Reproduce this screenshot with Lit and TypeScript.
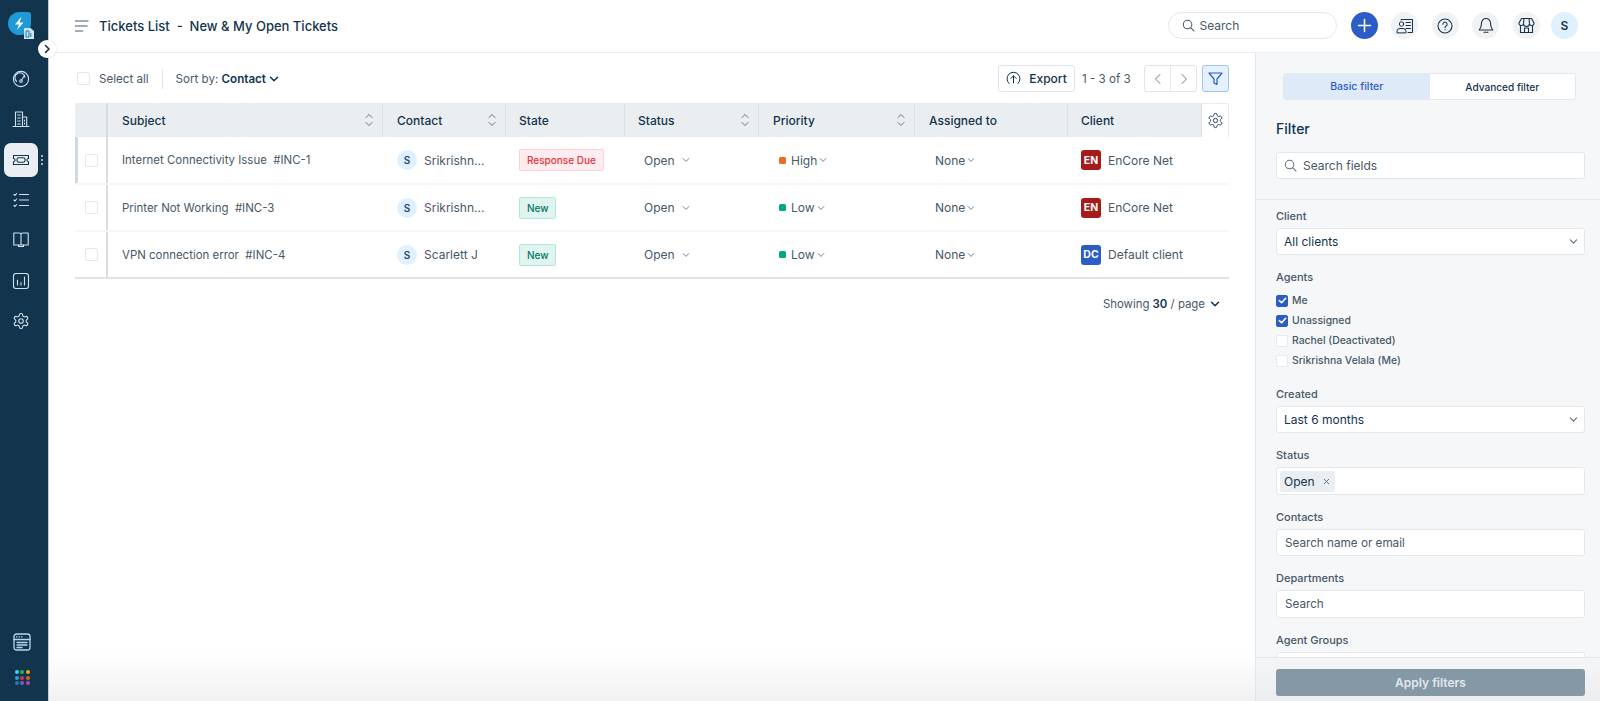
import { LitElement, html, svg, css } from "lit";
import { customElement } from "lit/decorators.js";

const gearPath = "M12.22 2h-.44a2 2 0 0 0-2 2v.18a2 2 0 0 1-1 1.73l-.43.25a2 2 0 0 1-2 0l-.15-.08a2 2 0 0 0-2.73.73l-.22.38a2 2 0 0 0 .73 2.73l.15.1a2 2 0 0 1 1 1.72v.51a2 2 0 0 1-1 1.74l-.15.09a2 2 0 0 0-.73 2.73l.22.38a2 2 0 0 0 2.73.73l.15-.08a2 2 0 0 1 2 0l.43.25a2 2 0 0 1 1 1.73V20a2 2 0 0 0 2 2h.44a2 2 0 0 0 2-2v-.18a2 2 0 0 1 1-1.73l.43-.25a2 2 0 0 1 2 0l.15.08a2 2 0 0 0 2.73-.73l.22-.39a2 2 0 0 0-.73-2.73l-.15-.08a2 2 0 0 1-1-1.74v-.5a2 2 0 0 1 1-1.74l.15-.09a2 2 0 0 0 .73-2.73l-.22-.38a2 2 0 0 0-2.73-.73l-.15.08a2 2 0 0 1-2 0l-.43-.25a2 2 0 0 1-1-1.73V4a2 2 0 0 0-2-2z";

const gear = (size: number, w = 1.3) => html`<svg width=${size} height=${size} viewBox="0 0 24 24" fill="none" stroke="currentColor" stroke-width=${w} stroke-linejoin="round"><path d=${gearPath}></path><circle cx="12" cy="12" r="3"></circle></svg>`;
const chev = (size = 8, w = 1.3) => html`<svg width=${size} height=${size} viewBox="0 0 10 10" fill="none" stroke="currentColor" stroke-width=${w} stroke-linecap="round" stroke-linejoin="round"><path d="M1.5 3.2 5 6.8l3.5-3.6"></path></svg>`;
const sort = html`<svg width="8" height="14" viewBox="0 0 8 14" fill="none" stroke="#5f7385" stroke-width="1" stroke-linecap="round" stroke-linejoin="round"><path d="M1 4.500 4 1.500 7 4.500"></path><path d="M1 9.500l3 3 3-3"></path></svg>`;
const searchIcon = (size: number) => html`<svg width=${size} height=${size} viewBox="0 0 14 14" fill="none" stroke="currentColor" stroke-width="1.1" stroke-linecap="round"><circle cx="6" cy="6" r="4.6"></circle><path d="M9.5 9.5 13 13"></path></svg>`;
const sideSvg = (body: unknown) => html`<svg width="18" height="18" viewBox="0 0 18 18" fill="none" stroke="currentColor" stroke-width="1.1" stroke-linecap="round" stroke-linejoin="round">${body}</svg>`;

const sideIcons = [
  svg`<circle cx="9" cy="9" r="7.6"></circle><path d="M4.600 11.500a5 5 0 1 1 8.300-4.200"></path><path d="M12.600 5.200 9.800 9.800"></path><circle cx="9" cy="11" r="1.300"></circle>`,
  svg`<path d="M1 16.500h16"></path><path d="M3.500 16.500V2h7v14.500"></path><path d="M10.500 7h4.200v9.500"></path><path d="M5.700 5h2.600M5.700 8h2.600M5.700 11h2.600M5.700 14h2.600M12.500 10v1M12.500 13v1"></path>`,
  svg`<path d="M1.500 4.500h15v3a1.600 1.600 0 0 0 0 3.200v2.800h-15v-2.800a1.600 1.600 0 0 0 0-3.200z"></path><rect x="5" y="6.800" width="8" height="4.400" rx="1.600"></rect>`,
  svg`<path d="M2 3.500l1 1 1.600-2M2 9l1 1 1.600-2M2 14.500l1 1 1.600-2"></path><path d="M7.500 3.500h9M7.500 9h9M7.500 14.500h9"></path>`,
  svg`<path d="M9 3.500v10.500M1.800 2H7.500A1.500 1.500 0 0 1 9 3.500 1.500 1.500 0 0 1 10.500 2h5.700v12H1.800z"></path><path d="M6.500 14v1.500h5V14"></path>`,
  svg`<rect x="1.500" y="1.500" width="15" height="15" rx="2.500"></rect><path d="M5.500 8v5M9 10.500V13M12.500 5v8"></path>`,
];

const rows = [
  { sub: "Internet Connectivity Issue", id: "#INC-1", contact: "Srikrishn...", state: "Response Due", cls: "due", pri: "High", pcls: "high", init: "EN", ccls: "en", client: "EnCore Net" },
  { sub: "Printer Not Working", id: "#INC-3", contact: "Srikrishn...", state: "New", cls: "new", pri: "Low", pcls: "low", init: "EN", ccls: "en", client: "EnCore Net" },
  { sub: "VPN connection error", id: "#INC-4", contact: "Scarlett J", state: "New", cls: "new", pri: "Low", pcls: "low", init: "DC", ccls: "dc", client: "Default client" },
];

const agents = [
  { name: "Me", on: true },
  { name: "Unassigned", on: true },
  { name: "Rachel (Deactivated)", on: false },
  { name: "Srikrishna Velala (Me)", on: false },
];

@customElement("app-root")
export class AppRoot extends LitElement {
  static styles = css`
    :host { display: block; height: 701px; overflow: hidden; font-family: Inter, "Liberation Sans", sans-serif; color: #12344d; font-size: 12px; }
    * { box-sizing: border-box; }
    .app { display: flex; height: 701px; position: relative; }
    .side { width: 49px; flex: none; background: #12344d; color: #cfe2f0; display: flex; flex-direction: column; align-items: stretch; border-right: 1px solid #c4ccd3; position: relative; }
    .logo { height: 59px; padding: 12px 0 0 8px; }
    .nav { display: flex; flex-direction: column; }
    .nav-item { height: 40.3px; display: flex; align-items: center; padding-left: 4px; position: relative; }
    .nav-box { width: 34px; height: 34px; border-radius: 7px; display: flex; align-items: center; justify-content: center; }
    .nav-item.on .nav-box { background: #ebeff3; color: #12344d; }
    .grip { position: absolute; left: 41px; top: 15px; display: flex; flex-direction: column; gap: 2px; }
    .grip i { width: 2px; height: 2px; background: #cfe2f0; border-radius: 50%; display: block; }
    .side-bottom { margin-top: auto; display: flex; flex-direction: column; align-items: center; padding: 0 0 16px 0; gap: 19px; width: 44px; }
    .apps { display: grid; grid-template-columns: repeat(3, 4px); gap: 1.5px; }
    .apps i { width: 4px; height: 4px; border-radius: 50%; display: block; }
    .toggle { position: absolute; left: 38px; top: 40px; width: 18px; height: 18px; border-radius: 50%; background: #fff; color: #12344d; display: flex; align-items: center; justify-content: center; z-index: 3; box-shadow: 0 0 2px rgba(18,52,77,.2); }

    .content { flex: 1; min-width: 0; display: flex; flex-direction: column; }
    .top { height: 53px; flex: none; border-bottom: 1px solid #ebeff3; display: flex; align-items: center; padding: 0 22px 1px 26px; background: #fff; }
    .burger { width: 14px; height: 12px; margin-right: 10px; color: #475867; display: block; }
    .title { font-size: 13px; font-weight: 500; color: #12344d; white-space: pre; }
    .title b { font-weight: 500; }
    .gsearch { margin-left: auto; width: 169px; height: 27px; border: 1px solid #e2e8ee; border-radius: 14px; display: flex; align-items: center; gap: 5px; padding-left: 13px; color: #475867; font-size: 12px; margin-right: 14px; }
    .circle { width: 27px; height: 27px; border-radius: 50%; background: #f0f2f4; color: #12344d; display: flex; align-items: center; justify-content: center; margin-right: 13.5px; flex: none; }
    .circle.plus { background: #2c5cc5; color: #fff; }
    .circle.me { background: #dff0ff; font-weight: 600; font-size: 12px; margin-right: 0; margin-left: -2px; color: #12344d; }

    .body { flex: 1; min-height: 0; display: flex; }
    .main { flex: 1; min-width: 0; padding: 12px 26px 0 26px; background: #fff; }
    .tools { height: 27px; display: flex; align-items: center; font-size: 11.6px; }
    .cb { width: 13px; height: 13px; border: 1px solid #e3e8ed; border-radius: 2px; background: #fff; flex: none; display: block; }
    .tools .cb { margin-left: 2px; margin-right: 9px; }
    .muted { color: #475867; }
    .vr { width: 1px; height: 20px; background: #dfe5ea; margin: 0 13px 0 13px; }
    .sort-by b { font-weight: 600; color: #12344d; }
    .sort-by { display: flex; align-items: center; gap: 3px; color: #475867; white-space: pre; }
    .sort-by svg { color: #12344d; }
    .right { margin-left: auto; display: flex; align-items: center; }
    .btn { height: 27px; border: 1px solid #dfe5ea; border-radius: 3px; background: #fff; display: flex; align-items: center; justify-content: center; }
    .export { width: 77px; gap: 8px; font-weight: 500; color: #12344d; font-size: 12px; }
    .count { color: #475867; margin: 0 14px 0 7px; width: 48px; white-space: nowrap; }
    .pager { width: 53px; display: flex; }
    .pager span { flex: 1; display: flex; align-items: center; justify-content: center; color: #a8b4bf; height: 100%; }
    .pager span + span { border-left: 1px solid #e6ebef; }
    .fbtn { width: 27px; margin-left: 5px; background: #e5f2fd; border-color: #9fc6f0; color: #2c5cc5; }

    .table { margin-top: 11px; position: relative; border-bottom: 2px solid #dde3e9; }
    .row { display: grid; grid-template-columns: 33px 275px 123px 119px 134px 156px 153px 134px 27px; }
    .cell { display: flex; align-items: center; padding-left: 14px; min-width: 0; white-space: pre; color: #475867; }
    .cell.s13 { padding-left: 13px; }
    .cell.subj { font-size: 11.45px; }
    .head { height: 34px; }
    .head .cell { background: #ebeef0; color: #12344d; font-weight: 500; justify-content: space-between; padding-right: 9px; border-right: 1px solid #dbe1e6; }
    .head .cell.first { border-right: 2px solid #d6dde3; padding: 0; }
    .head .gearc { background: #fff; padding: 0; border: 1px solid #e6ebef; border-left: 0; border-bottom: 0; border-radius: 0 3px 0 0; justify-content: center; color: #12344d; }
    .tr { height: 47px; border-bottom: 2px solid #f5f7f9; }
    .tr.act { height: 48px; }
    .tr:last-child { height: 45px; border-bottom: 0; }
    .tr .first { padding: 0 0 0 10px; border-right: 2px solid #d6dde3; }
    .tr.act .first { border-left: 3px solid #cfd9e2; padding-left: 7px; }
    .avatar { width: 20px; height: 20px; border-radius: 50%; background: #dff0ff; color: #264966; font-size: 10px; font-weight: 600; display: flex; align-items: center; justify-content: center; margin-right: 7px; flex: none; }
    .badge { height: 22px; border-radius: 2px; padding: 0 7px; font-size: 10px; font-weight: 500; display: flex; align-items: center; border: 1px solid; }
    .badge.due { background: #ffecf0; border-color: #ffd0d6; color: #e43538; }
    .badge.new { background: #e0f5f1; border-color: #b4e5da; color: #00795b; padding-right: 6px; }
    .drop { display: flex; align-items: center; color: #475867; }
    .drop svg { color: #5f7385; }
    .st { margin-left: 6px; gap: 4px; }
    .pr { margin-left: 6px; }
    .pr .dot { width: 7px; height: 7px; border-radius: 1.5px; margin-right: 5px; }
    .dot.high { background: #e86f25; }
    .dot.low { background: #00a886; }
    .pr svg { margin-left: 2px; }
    .asg { margin-left: 6px; gap: 2px; }
    .co { width: 20px; height: 20px; border-radius: 3px; color: #fff; font-size: 10.5px; font-weight: 700; display: flex; align-items: center; justify-content: center; margin-right: 7px; flex: none; }
    .co.en { background: #a61a1a; }
    .co.dc { background: #2c5cc5; }
    .showing { margin-top: 18px; font-size: 11.4px; display: flex; justify-content: flex-end; align-items: center; gap: 5px; padding-right: 9px; color: #475867; white-space: pre; }
    .showing b { font-weight: 600; color: #12344d; }
    .showing svg { color: #12344d; }

    .panel { width: 345px; flex: none; background: #f5f7f9; border-left: 1px solid #e2e8ee; display: flex; flex-direction: column; min-height: 0; }
    .ptop { height: 147px; flex: none; border-bottom: 1px solid #e2e8ee; padding: 20px 15px 0 20px; }
    .tabs { margin-left: 7px; width: 293px; height: 27px; display: flex; border: 1px solid #e3e8ed; border-radius: 3px; overflow: hidden; font-size: 10.5px; font-weight: 500; background: #fff; }
    .tabs span { flex: 1; display: flex; align-items: center; justify-content: center; color: #12344d; }
    .tabs .adv { font-size: 10.1px; }
    .tabs .on { background: #dfeaf8; color: #2c5cc5; }
    .ftitle { font-size: 14px; font-weight: 500; margin-top: 20px; height: 18px; line-height: 18px; color: #12344d; }
    .field { height: 27px; background: #fff; border: 1px solid #e3e8ed; border-radius: 3px; display: flex; align-items: center; font-size: 12px; color: #475867; width: 309px; }
    .fsearch { margin-top: 14px; padding-left: 7px; gap: 6px; color: #5f7385; }
    .fsearch span { color: #475867; font-size: 12px; }
    .pbody { flex: 1; min-height: 0; overflow: hidden; padding: 9px 0 0 20px; }
    .lbl { font-size: 11px; font-weight: 500; color: #475867; height: 14px; line-height: 14px; margin-bottom: 5px; }
    .group { margin-bottom: 15px; }
    .group.agents { margin-bottom: 20px; }
    .select { justify-content: space-between; padding: 0 6px 0 7px; color: #12344d; }
    .select svg { color: #5f7385; }
    .checks { display: flex; flex-direction: column; gap: 7px; margin-top: 10px; }
    .check { display: flex; align-items: center; gap: 4px; height: 13px; font-size: 10.4px; font-weight: 500; color: #475867; }
    .box { width: 12px; height: 12px; border-radius: 2px; border: 1px solid #e6ebef; background: #fff; flex: none; display: flex; align-items: center; justify-content: center; }
    .box.on { background: #2c5cc5; border-color: #2c5cc5; color: #fff; }
    .tagf { height: 28px; padding-left: 3px; }
    .tag { height: 21px; width: 55px; background: #ebeef0; border-radius: 3px; display: flex; align-items: center; padding-left: 4px; gap: 8px; color: #12344d; font-size: 12px; }
    .tag svg { color: #5f7385; }
    .ph { padding-left: 8px; font-size: 11.7px; }
    .ph.tall { height: 28px; }
    .foot { height: 44px; flex: none; border-top: 1px solid #e2e8ee; padding: 11px 0 0 20px; position: relative; z-index: 3; }
    .apply { width: 309px; height: 27px; border-radius: 3px; background: #8598a6; color: #e2e7eb; font-weight: 600; font-size: 12px; display: flex; align-items: center; justify-content: center; }
    .fade { position: absolute; left: 49px; right: 0; bottom: 0; height: 50px; background: linear-gradient(to bottom, rgba(225,225,225,0), rgba(225,225,225,.45)); pointer-events: none; z-index: 2; }
  `;

  private sel(label: string, val: string) {
    return html`<div class="group"><div class="lbl">${label}</div><div class="field select"><span>${val}</span>${chev(9, 1.3)}</div></div>`;
  }

  render() {
    const colors = ["#35d4ee", "#1fae6b", "#f2a900", "#2f9fe0", "#d0343c", "#e8591c", "#2d74b0", "#8e53b8", "#a24dbb"];
    return html`<div class="app">
      <aside class="side">
        <div class="logo">
          <svg width="28" height="28" viewBox="0 0 28 28">
            <path d="M11.500 0H20a3 3 0 0 1 3 3v8.500A11.500 11.500 0 1 1 11.500 0z" fill="#1f9ad6"></path>
            <path d="M13.500 4.500 7 12.500h4L9 18l6.500-7.500h-4z" fill="#fff"></path>
            <path d="M16 16h6.500l3.500 3v8H16z" fill="#cfe3f2"></path>
            <path d="M18 19h3v6h-3zM22.800 21v4" stroke="#1f7db3" stroke-width="1" fill="none"></path>
          </svg>
        </div>
        <div class="nav">
          ${sideIcons.map((b, i) => html`<div class="nav-item ${i === 2 ? "on" : ""}"><div class="nav-box">${sideSvg(b)}</div>${i === 2 ? html`<div class="grip"><i></i><i></i><i></i></div>` : ""}</div>`)}
          <div class="nav-item"><div class="nav-box">${gear(18, 1.5)}</div></div>
        </div>
        <div class="side-bottom">
          <svg width="18" height="18" viewBox="0 0 18 18" fill="none" stroke="#b9d5ec" stroke-width="1.3" stroke-linecap="round"><rect x="1" y="1" width="16" height="16" rx="2.500"></rect><path d="M1 6.500h16M3.500 3.800h.5M6 3.800h.5M8.500 3.800h.5M4 9.500h10M4 12h10M4 14.500h5"></path></svg>
          <div class="apps">${colors.map((c) => html`<i style="background:${c}"></i>`)}</div>
        </div>
        <div class="toggle"><svg width="10" height="10" viewBox="0 0 10 10" fill="none" stroke="currentColor" stroke-width="1.6" stroke-linecap="round" stroke-linejoin="round"><path d="M3.500 1.500 7 5 3.500 8.500"></path></svg></div>
      </aside>
      <div class="content">
        <header class="top">
          <svg class="burger" viewBox="0 0 14 12" fill="none" stroke="currentColor" stroke-width="1"><path d="M0 1h13.500M0 6h12.500M0 11h8"></path></svg>
          <div class="title"><b>Tickets List</b>  -  New &amp; My Open Tickets</div>
          <div class="gsearch">${searchIcon(13)}<span>Search</span></div>
          <div class="circle plus"><svg width="15" height="15" viewBox="0 0 15 15" stroke="currentColor" stroke-width="1.5" stroke-linecap="round"><path d="M7.500 1.500v12M1.500 7.500h12"></path></svg></div>
          <div class="circle"><svg width="18" height="16" viewBox="0 0 18 16" fill="none" stroke="currentColor" stroke-width="1" stroke-linecap="round"><path d="M5 2V1.500h11.500v13H12"></path><path d="M10 4.500h4.500M10 7.500h4.500M10 10.500h4.500"></path><circle cx="5.500" cy="6" r="2.200"></circle><path d="M1 14.500v-1.500a3 3 0 0 1 3-2.500h3a3 3 0 0 1 3 2.500v1.500z"></path></svg></div>
          <div class="circle"><svg width="16" height="16" viewBox="0 0 16 16" fill="none" stroke="currentColor" stroke-width="1.1" stroke-linecap="round"><circle cx="8" cy="8" r="7"></circle><path d="M5.900 6.200a2.100 2.100 0 1 1 3.200 1.800c-.7.4-1.100.8-1.100 1.600"></path><path d="M8 11.600v.2"></path></svg></div>
          <div class="circle"><svg width="16" height="17" viewBox="0 0 16 17" fill="none" stroke="currentColor" stroke-width="1.1" stroke-linejoin="round" stroke-linecap="round"><path d="M8 1.500a4.500 4.500 0 0 1 4.500 4.500c0 4 1 5.500 2.300 7H1.200c1.300-1.500 2.300-3 2.300-7A4.500 4.500 0 0 1 8 1.500z"></path><path d="M6 15.200h4"></path></svg></div>
          <div class="circle"><svg width="17" height="17" viewBox="0 0 17 17" fill="none" stroke="currentColor" stroke-width="1.1" stroke-linejoin="round"><path d="M3.500 1.500h10l2.500 4.500a2.200 2.200 0 0 1-4.500.5 2.900 2.900 0 0 1-6 0A2.200 2.200 0 0 1 1 6z"></path><path d="M2.500 8.500v7h12v-7"></path><path d="M6.500 15.500v-4.500h4v4.500"></path><path d="M6 1.500 5.500 6.500M11 1.500l.5 5"></path></svg></div>
          <div class="circle me">S</div>
        </header>
        <div class="body">
          <main class="main">
            <div class="tools">
              <span class="cb"></span><span class="muted">Select all</span><span class="vr"></span>
              <span class="sort-by"><span>Sort by: <b>Contact</b></span>${chev(10, 1.5)}</span>
              <div class="right">
                <div class="btn export"><svg width="15" height="15" viewBox="0 0 15 15" fill="none" stroke="currentColor" stroke-width="1" stroke-linecap="round" stroke-linejoin="round"><path d="M3 12.500a6.500 6.500 0 1 1 9 0"></path><path d="M7.500 12V5M4.800 7.500l2.700-2.700 2.700 2.700"></path></svg><span>Export</span></div>
                <span class="count">1 - 3 of 3</span>
                <div class="btn pager"><span><svg width="8" height="12" viewBox="0 0 8 12" fill="none" stroke="currentColor" stroke-width="1.1" stroke-linecap="round" stroke-linejoin="round"><path d="M6 1.500 1.500 6 6 10.500"></path></svg></span><span><svg width="8" height="12" viewBox="0 0 8 12" fill="none" stroke="currentColor" stroke-width="1.1" stroke-linecap="round" stroke-linejoin="round"><path d="M2 1.500 6.500 6 2 10.500"></path></svg></span></div>
                <div class="btn fbtn"><svg width="15" height="14" viewBox="0 0 15 14" fill="none" stroke="currentColor" stroke-width="1.2" stroke-linejoin="round"><path d="M1 1h13L9 7v5.500L6 11V7z"></path></svg></div>
              </div>
            </div>
            <div class="table">
              <div class="row head">
                <div class="cell first"></div>
                <div class="cell"><span>Subject</span>${sort}</div>
                <div class="cell"><span>Contact</span>${sort}</div>
                <div class="cell s13"><span>State</span></div>
                <div class="cell s13"><span>Status</span>${sort}</div>
                <div class="cell"><span>Priority</span>${sort}</div>
                <div class="cell"><span>Assigned to</span></div>
                <div class="cell s13"><span>Client</span></div>
                <div class="cell gearc">${gear(17)}</div>
              </div>
              ${rows.map((r, i) => html`<div class="row tr ${i === 0 ? "act" : ""}">
                <div class="cell first"><span class="cb"></span></div>
                <div class="cell subj">${r.sub}  ${r.id}</div>
                <div class="cell"><span class="avatar">S</span>${r.contact}</div>
                <div class="cell s13"><span class="badge ${r.cls}">${r.state}</span></div>
                <div class="cell s13"><span class="drop st">Open ${chev(8, 1.1)}</span></div>
                <div class="cell"><span class="drop pr"><span class="dot ${r.pcls}"></span>${r.pri}${chev(8, 1.1)}</span></div>
                <div class="cell"><span class="drop asg">None${chev(8, 1.1)}</span></div>
                <div class="cell s13"><span class="co ${r.ccls}">${r.init}</span>${r.client}</div>
                <div class="cell"></div>
              </div>`)}
            </div>
            <div class="showing"><span>Showing <b>30</b> / page</span>${chev(10, 1.5)}</div>
          </main>
          <aside class="panel">
            <div class="ptop">
              <div class="tabs"><span class="on">Basic filter</span><span class="adv">Advanced filter</span></div>
              <div class="ftitle">Filter</div>
              <div class="field fsearch">${searchIcon(13)}<span>Search fields</span></div>
            </div>
            <div class="pbody">
              ${this.sel("Client", "All clients")}
              <div class="group agents">
                <div class="lbl">Agents</div>
                <div class="checks">
                  ${agents.map((a) => html`<div class="check"><span class="box ${a.on ? "on" : ""}">${a.on ? html`<svg width="9" height="9" viewBox="0 0 10 10" fill="none" stroke="currentColor" stroke-width="1.8" stroke-linecap="round" stroke-linejoin="round"><path d="M1.500 5.200 4 7.500l4.500-5"></path></svg>` : ""}</span>${a.name}</div>`)}
                </div>
              </div>
              ${this.sel("Created", "Last 6 months")}
              <div class="group"><div class="lbl">Status</div><div class="field tagf"><span class="tag">Open <svg width="7" height="7" viewBox="0 0 7 7" stroke="currentColor" stroke-width="1"><path d="M1 1l5 5M6 1 1 6"></path></svg></span></div></div>
              <div class="group"><div class="lbl">Contacts</div><div class="field ph">Search name or email</div></div>
              <div class="group"><div class="lbl">Departments</div><div class="field ph tall">Search</div></div>
              <div class="group"><div class="lbl">Agent Groups</div><div class="field ph tall"></div></div>
            </div>
            <div class="foot"><div class="apply">Apply filters</div></div>
          </aside>
        </div>
        <div class="fade"></div>
      </div>
    </div>`;
  }
}
